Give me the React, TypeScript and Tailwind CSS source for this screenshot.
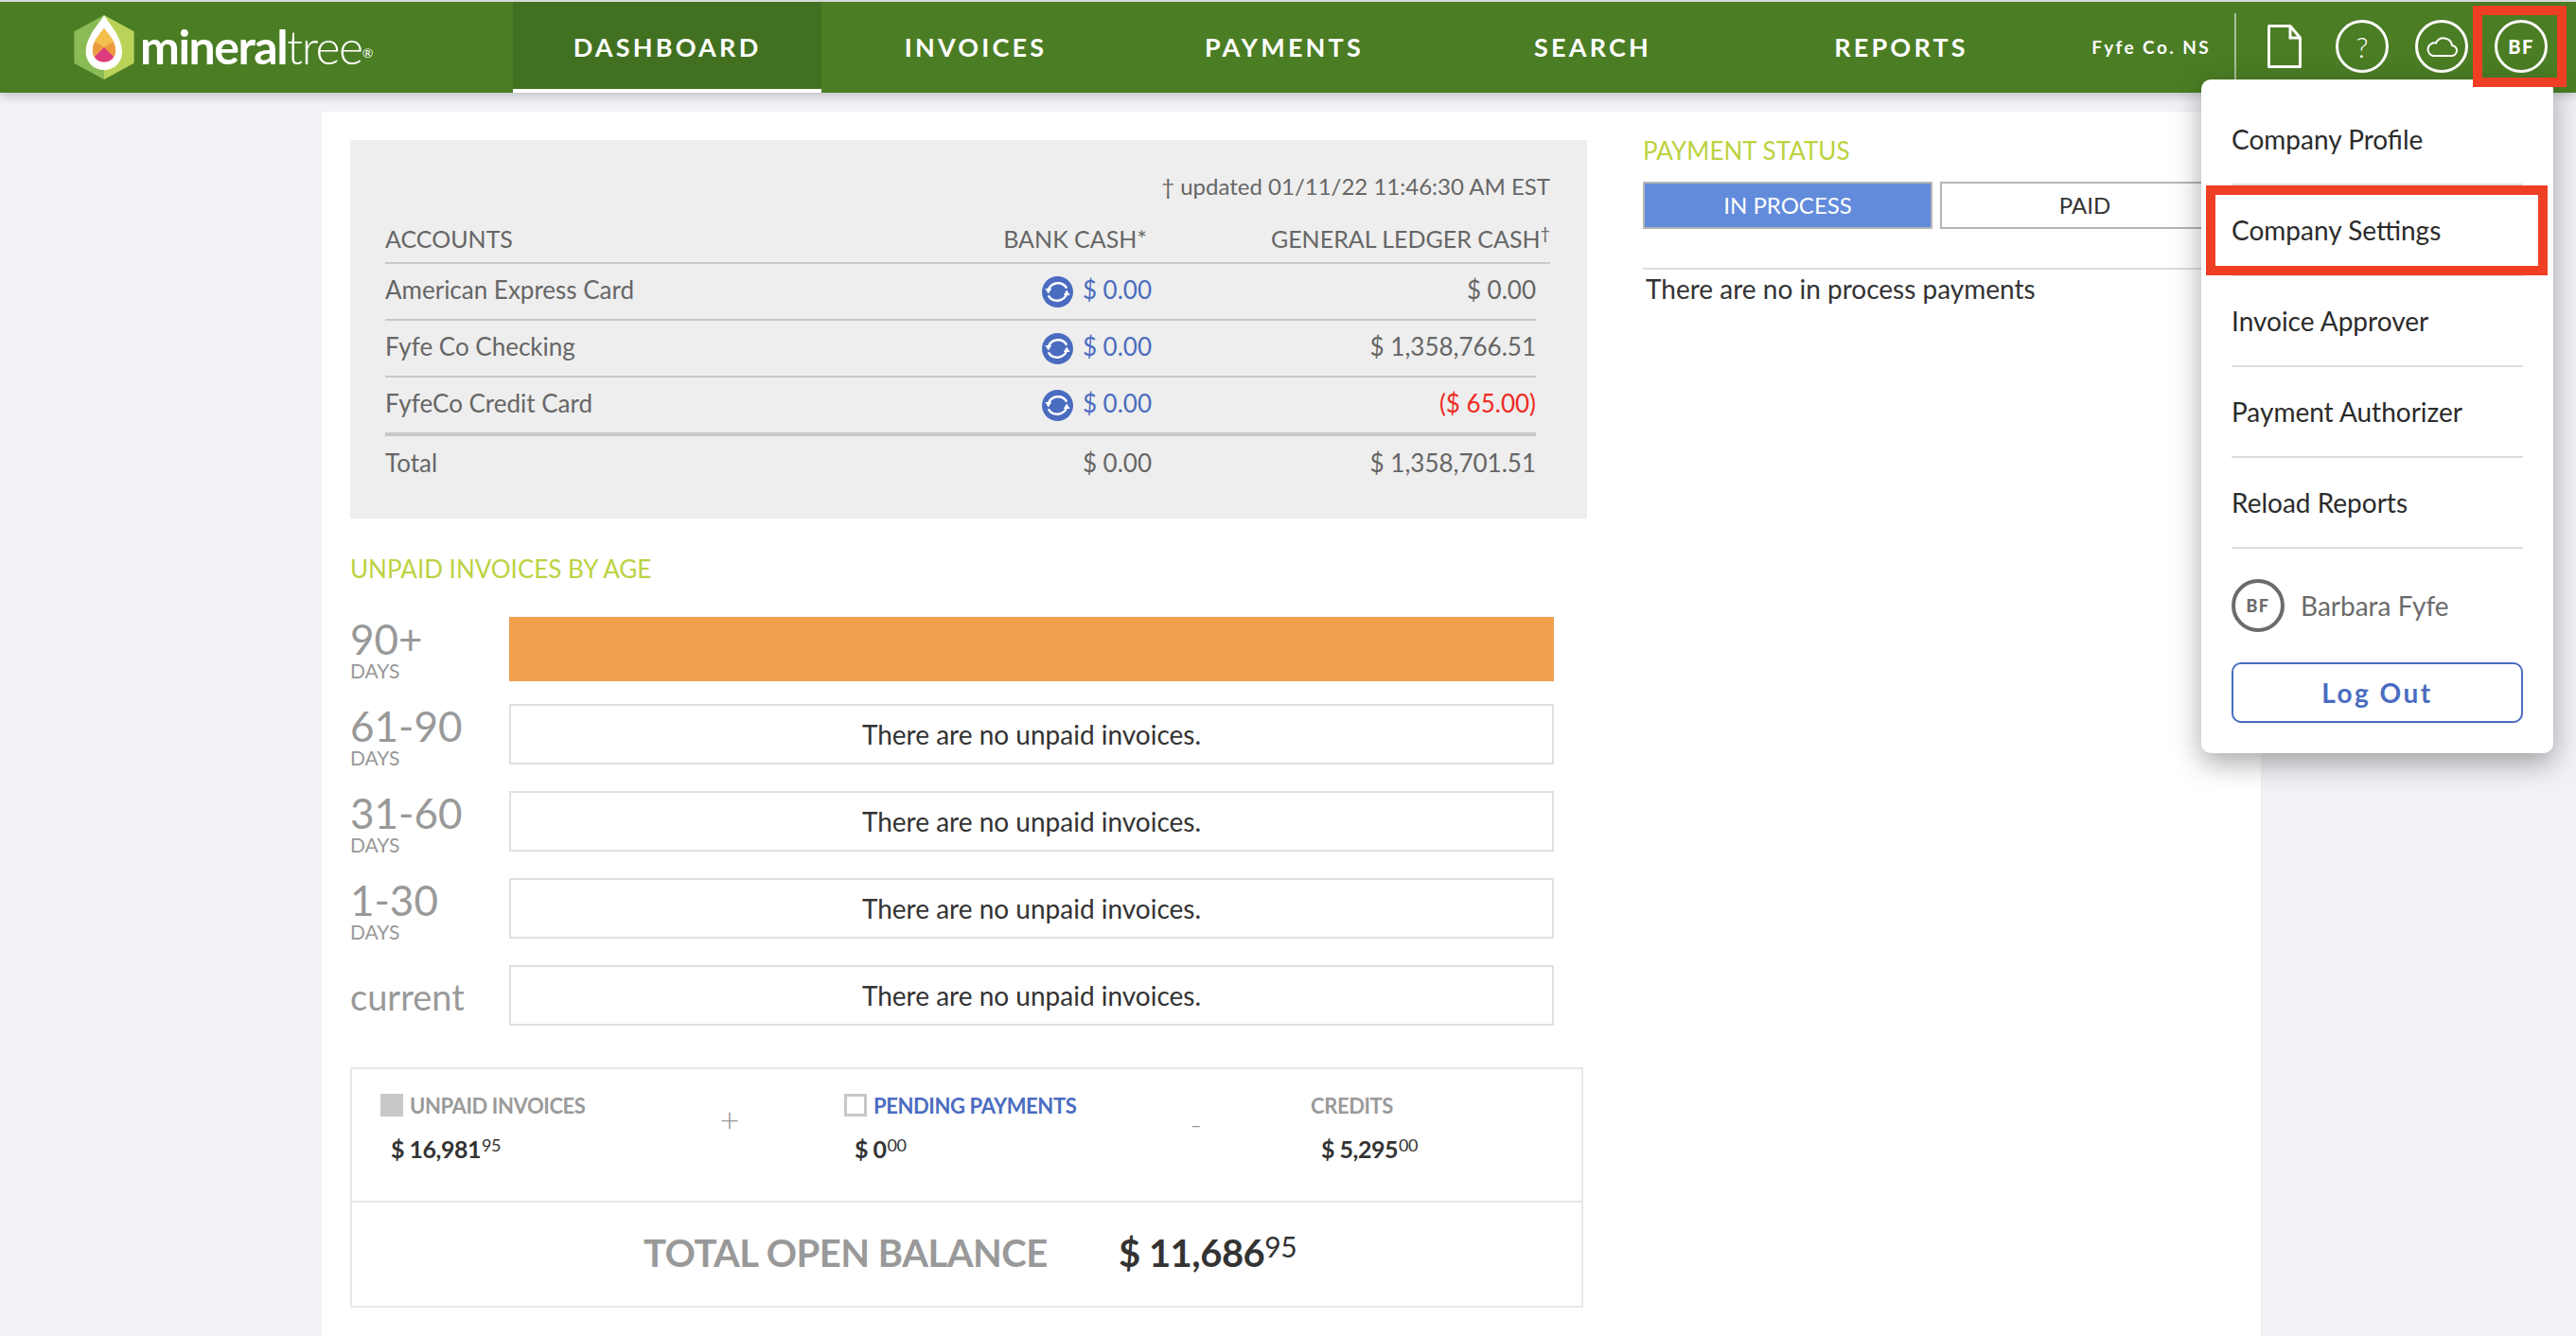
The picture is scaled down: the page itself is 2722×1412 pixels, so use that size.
import { ReactNode } from "react";

const tabs = ["DASHBOARD", "INVOICES", "PAYMENTS", "SEARCH", "REPORTS"];

const accounts = [
  { name: "American Express Card", ledger: "$ 0.00" },
  { name: "Fyfe Co Checking", ledger: "$ 1,358,766.51" },
  { name: "FyfeCo Credit Card", ledger: "($ 65.00)", negative: true },
];

const ages = [
  { label: "61-90", days: true },
  { label: "31-60", days: true },
  { label: "1-30", days: true },
  { label: "current", days: false },
];

const menuItems = ["Company Profile", "Company Settings", "Invoice Approver", "Payment Authorizer", "Reload Reports"];

function LogoMark() {
  return (
    <svg viewBox="55 48 190 204" className="w-[64px] h-[68px] shrink-0">
      <defs>
        <clipPath id="drop">
          <path d="M150 90C160 105 187 130 187 160C187 182 170 197 150 197C130 197 113 182 113 160C113 130 140 105 150 90Z" />
        </clipPath>
      </defs>
      <polygon points="150,48 55,100 55,200 150,252" fill="#8abb55" />
      <polygon points="150,48 245,100 245,200 150,252" fill="#b9d358" />
      <path d="M150 48C165 75 207 115 207 165C207 198 182 222 150 222C118 222 92 198 92 165C92 115 135 75 150 48Z" fill="#fff" />
      <g clipPath="url(#drop)">
        <rect x="100" y="80" width="100" height="125" fill="#eb9c40" />
        <polygon points="150,85 190,125 150,150 110,125" fill="#f3c04b" />
        <polygon points="150,150 200,200 100,200" fill="#dd3a80" />
      </g>
    </svg>
  );
}

function SyncIcon() {
  return (
    <svg viewBox="0 0 34 34" className="w-[33px] h-[33px] shrink-0 mt-[5px]">
      <circle cx="17" cy="17" r="17" fill="#4a6cc0" />
      <path d="M27 13A11 11 0 0 0 7 15" fill="none" stroke="#fff" strokeWidth="2.4" />
      <polygon points="3.5,13.5 10.5,13.5 7,19" fill="#fff" />
      <path d="M7 21A11 11 0 0 0 27 19" fill="none" stroke="#fff" strokeWidth="2.4" />
      <polygon points="23.5,20.5 30.5,20.5 27,15" fill="#fff" />
    </svg>
  );
}

function HeaderCircle({ children }: { children: ReactNode }) {
  return (
    <div className="w-14 h-14 rounded-full border-[3px] border-white flex items-center justify-center text-white shrink-0">
      {children}
    </div>
  );
}

function Amount({ value, cents }: { value: string; cents: string }) {
  return (
    <span className="text-[25px] font-bold text-[#333] tracking-[-0.5px]">
      {value}
      <sup className="text-[18px] font-normal top-[-7px] align-baseline relative ml-px">{cents}</sup>
    </span>
  );
}

function Summary({ label, value, cents, square, blue, width }: { label: string; value: string; cents: string; square?: string; blue?: boolean; width: string }) {
  return (
    <div className={width}>
      <div className="flex items-center gap-[7px] h-6">
        {square && <span className={`w-6 h-6 shrink-0 ${square}`} />}
        <span className={`text-[22px] font-bold tracking-[-0.4px] ${blue ? "text-[#4a6cc0]" : "text-[#9a9a9a]"}`}>{label}</span>
      </div>
      <div className="h-6 mt-[23px] ml-[11px] flex items-center">
        <Amount value={value} cents={cents} />
      </div>
    </div>
  );
}

export default function App() {
  return (
    <div className="relative w-[2722px] h-[1412px] overflow-hidden bg-[#f1f2f5] border-t-2 border-[#d8d8d8] [font-family:Lato,sans-serif] text-[#333]">
      <header className="relative z-10 flex h-[96px] bg-[#4b7d24] shadow-[0_3px_10px_rgba(0,0,0,0.22)] text-white">
        <div className="w-[542px] pl-[78px] flex items-center">
          <LogoMark />
          <span className="ml-[6px] text-[50px] leading-none tracking-[-1.5px] mb-[2px]">
            <span className="font-bold">mineral</span>
            <span className="font-light">tree</span>
            <sup className="text-[14px]">®</sup>
          </span>
        </div>
        {tabs.map((tab, i) => (
          <div
            key={tab}
            className={`w-[326px] flex items-center justify-center text-[27px] font-bold tracking-[3.2px] ${i === 0 ? "bg-[#417120] border-b-4 border-white pt-1" : ""}`}
          >
            {tab}
          </div>
        ))}
        <div className="w-[189px] pr-[25px] flex items-center justify-end text-[19px] font-bold tracking-[2.4px]">Fyfe Co. NS</div>
        <div className="w-[2px] h-[70px] mt-3 bg-[#a7bf94]" />
        <div className="flex items-center ml-[33px] mb-[2px]">
          <svg viewBox="0 0 36 46" className="w-9 h-[46px] shrink-0" fill="none" stroke="#fff" strokeWidth="3">
            <path d="M1.5 1.5H24L34.5 14V44.5H1.5Z" strokeLinejoin="round" />
            <path d="M24 1.5V14H34.5" />
          </svg>
          <div className="ml-9">
            <HeaderCircle>
              <span className="text-[30px] font-light leading-none">?</span>
            </HeaderCircle>
          </div>
          <div className="ml-7">
            <HeaderCircle>
              <svg viewBox="0 0 33 21" className="w-[33px] h-[21px]" fill="none" stroke="#fff" strokeWidth="2">
                <path d="M7 20H26A5.5 5.5 0 0 0 27 9A9 9 0 0 0 10 6.5A6.8 6.8 0 0 0 7 20Z" />
              </svg>
            </HeaderCircle>
          </div>
          <div className="ml-7">
            <HeaderCircle>
              <span className="text-[20px] font-black tracking-[1.5px]">BF</span>
            </HeaderCircle>
          </div>
        </div>
      </header>

      <main className="ml-[340px] mt-[20px] w-[2049px] h-[1294px] bg-white pt-[27px] pl-[30px] flex items-start">
        <div className="w-[1307px] pt-[3px]">
          <section className="h-[400px] bg-[#eeeeee] pt-[35px] pl-[37px] pr-[39px] text-[26px] text-[#666]">
            <div className="h-7 flex items-center justify-end text-[24px]">† updated 01/11/22 11:46:30 AM EST</div>
            <div className="flex items-center h-[50px] mt-[18px] border-b-2 border-[#c8c8c8] text-[25px]">
              <span className="flex-1">ACCOUNTS</span>
              <span>BANK CASH*</span>
              <span className="w-[426px] text-right">
                GENERAL LEDGER CASH<sup className="text-[18px]">†</sup>
              </span>
            </div>
            {accounts.map((a) => (
              <div key={a.name} className="flex items-center h-[60px] mr-[15px] border-b-2 border-[#c8c8c8] pb-1">
                <span className="flex-1">{a.name}</span>
                <SyncIcon />
                <span className="ml-[10px] text-[#4a6cc0]">$ 0.00</span>
                <span className={`w-[406px] text-right ${a.negative ? "text-[#ee2b24]" : ""}`}>{a.ledger}</span>
              </div>
            ))}
            <div className="flex items-center h-[2px] mr-[15px] bg-[#c8c8c8]" />
            <div className="flex items-center h-[54px] mr-[15px] mt-px">
              <span className="flex-1">Total</span>
              <span>$ 0.00</span>
              <span className="w-[406px] text-right">$ 1,358,701.51</span>
            </div>
          </section>

          <h2 className="h-7 mt-[39px] flex items-center text-[26px] font-normal text-[#bcd23f]">UNPAID INVOICES BY AGE</h2>

          <div className="flex mt-[37px] h-[68px]">
            <div className="w-[168px] text-[#999]">
              <div className="h-[46px] text-[44px] leading-[46px]">90+</div>
              <div className="h-[22px] text-[21px] leading-[22px]">DAYS</div>
            </div>
            <div className="w-[1104px] bg-[#f0a04d]" />
          </div>

          {ages.map((age) => (
            <div key={age.label} className="flex h-16 mt-[24px] first-of-type:mt-6 [&+&]:mt-7">
              <div className="w-[168px] text-[#999]">
                {age.days ? (
                  <>
                    <div className="h-[46px] text-[44px] leading-[46px]">{age.label}</div>
                    <div className="h-[22px] text-[21px] leading-[22px]">DAYS</div>
                  </>
                ) : (
                  <div className="h-16 pt-[3px] flex items-center text-[38px]">{age.label}</div>
                )}
              </div>
              <div className="w-[1104px] border-2 border-[#e0e0e0] flex items-center justify-center text-[28px] text-[#333]">
                There are no unpaid invoices.
              </div>
            </div>
          ))}

          <section className="w-[1303px] mt-[44px] border-2 border-[#e8e8e8] h-[254px]">
            <div className="flex h-[141px] pt-[26px] pl-[30px] border-b-2 border-[#e8e8e8]">
              <Summary width="w-[359px]" label="UNPAID INVOICES" value="$ 16,981" cents="95" square="bg-[#c8c8c8]" />
              <div className="w-5 h-10 mt-[7px] mr-[111px] flex items-center justify-center text-[36px] font-light text-[#999]">+</div>
              <Summary width="w-[362px]" label="PENDING PAYMENTS" value="$ 0" cents="00" square="border-[3px] border-[#c8c8c8]" blue />
              <div className="w-5 h-10 mt-[11px] mr-[111px] flex items-center justify-center text-[36px] font-light text-[#999]">-</div>
              <Summary width="w-[250px]" label="CREDITS" value="$ 5,295" cents="00" />
            </div>
            <div className="flex items-center h-[109px] pl-[308px] pb-1">
              <span className="w-[502px] text-[40px] font-bold text-[#999] tracking-[-0.5px]">TOTAL OPEN BALANCE</span>
              <span className="text-[40px] font-bold text-[#333] tracking-[-0.5px]">
                $ 11,686
                <sup className="text-[30px] font-normal relative top-[-10px] align-baseline">95</sup>
              </span>
            </div>
          </section>
        </div>

        <div className="ml-[59px] w-[620px]">
          <h2 className="h-7 flex items-center text-[26px] font-normal text-[#bcd23f]">PAYMENT STATUS</h2>
          <div className="flex gap-2 mt-[19px]">
            <div className="w-[306px] h-[50px] flex items-center justify-center bg-[#628bdb] border-2 border-[#b5b5b5] text-white text-[24px]">IN PROCESS</div>
            <div className="w-[306px] h-[50px] flex items-center justify-center bg-white border-2 border-[#b5b5b5] text-[#333] text-[24px]">PAID</div>
          </div>
          <div className="h-[2px] mt-[41px] bg-[#dddddd]" />
          <p className="ml-[3px] h-10 flex items-center text-[28px]">There are no in process payments</p>
        </div>
      </main>

      <div className="absolute z-20 left-[2326px] top-[82px] w-[372px] h-[712px] bg-white rounded-[10px] shadow-[0_10px_30px_rgba(0,0,0,0.35)] pt-4 px-8">
        {menuItems.map((item) => (
          <div key={item} className="h-24 flex items-center border-b-2 border-[#dddddd] text-[28px] text-[#2b2b2b]">
            {item}
          </div>
        ))}
        <div className="flex items-center mt-8 h-14">
          <div className="w-14 h-14 rounded-full border-[4px] border-[#6b6b6b] flex items-center justify-center text-[18px] font-black tracking-[1.5px] text-[#6b6b6b]">BF</div>
          <span className="ml-[17px] text-[28px] text-[#6b6b6b]">Barbara Fyfe</span>
        </div>
        <div className="mt-8 h-16 rounded-[10px] border-2 border-[#4a6cc0] flex items-center justify-center text-[28px] font-bold tracking-[2.5px] text-[#4a6cc0]">Log Out</div>
      </div>

      <div className="absolute z-30 left-[2331px] top-[194px] w-[361px] h-[95px] border-[10px] border-[#ee3f25] pointer-events-none" />
      <div className="absolute z-30 left-[2613px] top-[4px] w-[99px] h-[86px] border-[10px] border-[#ee3f25] pointer-events-none" />
    </div>
  );
}
